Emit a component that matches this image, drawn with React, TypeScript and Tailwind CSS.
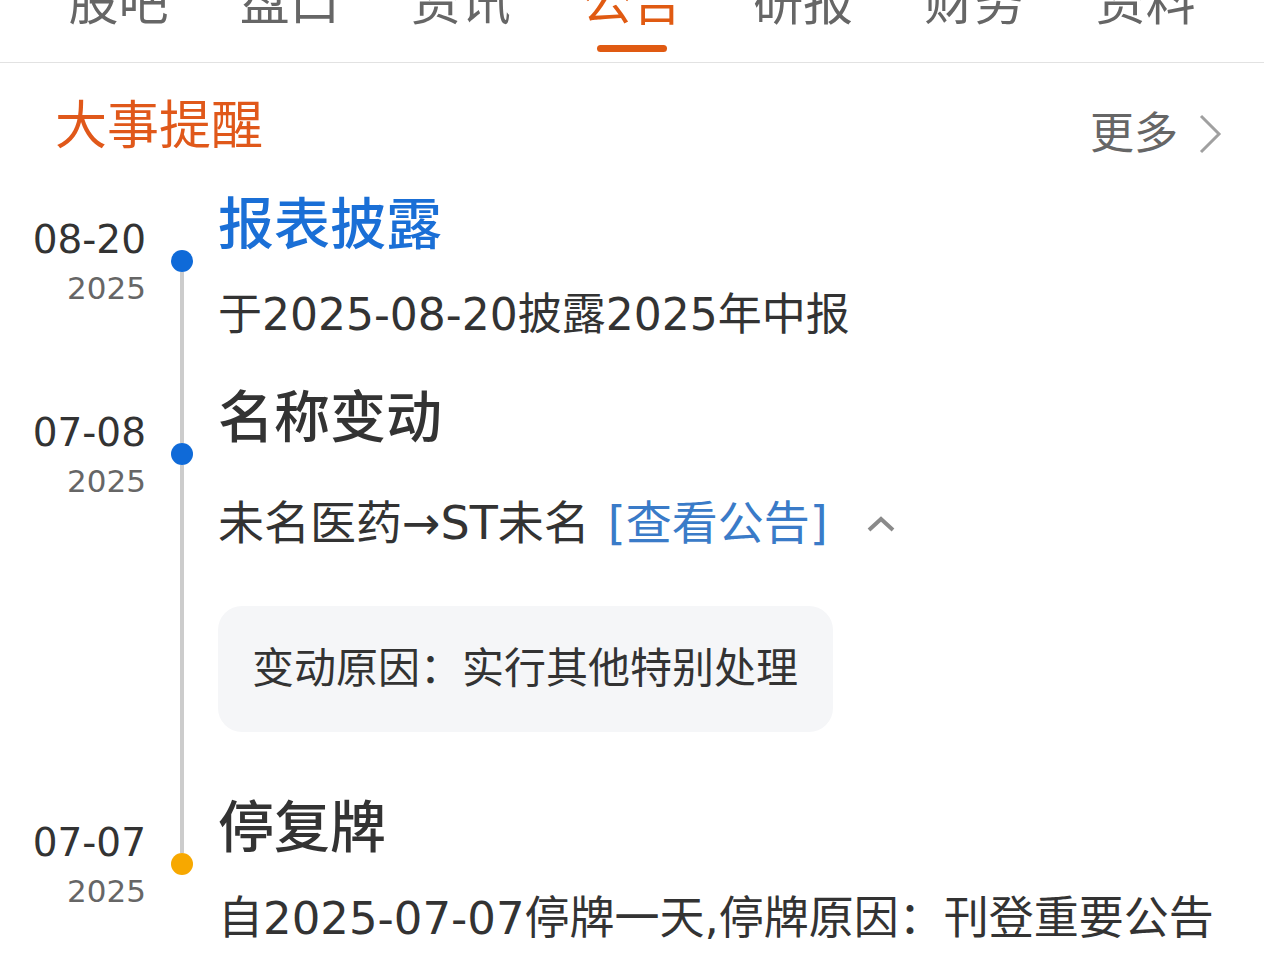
import React from 'react';

const FONT = '"DejaVu Sans", "Noto Sans CJK SC", sans-serif';

const tabs = ['股吧', '盘口', '资讯', '公告', '研报', '财务', '资料'];

interface EventItem {
  date: string;
  year: string;
  title: string;
  dot: string;
  titleClass: string;
  last?: boolean;
  first?: boolean;
  body: React.ReactNode;
  pb: string;
}

const ChevronUp = () => (
  <svg width="30" height="18" viewBox="0 0 30 18" className="ml-[38px] mt-[15px] shrink-0">
    <polyline points="3,15 15,4 27,15" fill="none" stroke="#8a8a8a" strokeWidth="4" />
  </svg>
);

const events: EventItem[] = [
  {
    date: '08-20',
    year: '2025',
    title: '报表披露',
    dot: 'bg-[#0f6ad8]',
    titleClass: 'text-[#1a6fd6]',
    first: true,
    pb: 'pb-[53px]',
    body: <p className="mt-[40px] text-[44px] leading-none text-[#333]">于2025-08-20披露2025年中报</p>,
  },
  {
    date: '07-08',
    year: '2025',
    title: '名称变动',
    dot: 'bg-[#0f6ad8]',
    titleClass: 'text-[#333]',
    pb: 'pb-[68px]',
    body: (
      <>
        <div className="mt-[54px] flex items-start whitespace-nowrap text-[46px] leading-none text-[#333]">
          <span>未名医药→ST未名</span>
          <span className="ml-[18px] text-[#3a7bc8]">[查看公告]</span>
          <ChevronUp />
        </div>
        <div className="mt-[60px] w-[615px] whitespace-nowrap rounded-[24px] bg-[#f5f6f8] px-[34px] py-[42px] text-[42px] leading-none text-[#333]">
          变动原因：实行其他特别处理
        </div>
      </>
    ),
  },
  {
    date: '07-07',
    year: '2025',
    title: '停复牌',
    dot: 'bg-[#f7a800]',
    titleClass: 'text-[#333]',
    last: true,
    pb: 'pb-[60px]',
    body: (
      <p className="mt-[40px] whitespace-nowrap text-[45px] leading-none text-[#333]">
        自2025-07-07停牌一天,停牌原因：刊登重要公告
      </p>
    ),
  },
];

export default function App() {
  return (
    <div className="min-h-[974px] overflow-hidden bg-white" style={{ fontFamily: FONT }}>
      {/* tab bar, scrolled partly out of view */}
      <div className="-mt-[22px] grid grid-cols-7 border-b border-[#e2e2e2] px-[33px] pb-[10px]">
        {tabs.map((t) => {
          const active = t === '公告';
          return (
            <div key={t} className="flex flex-col items-center">
              <span className={`text-[50px] leading-none ${active ? 'text-[#e05a12]' : 'text-[#666]'}`}>{t}</span>
              <span className={`mt-[17px] h-[7px] w-[70px] rounded-full ${active ? 'bg-[#e05a12]' : 'bg-transparent'}`} />
            </div>
          );
        })}
      </div>

      {/* section header */}
      <div className="flex items-start justify-between pl-[55px] pr-[42px] pt-[37px]">
        <h2 className="text-[52px] leading-none text-[#e0581a]">大事提醒</h2>
        <div className="mt-[12px] flex items-center">
          <span className="text-[44px] leading-none text-[#666]">更多</span>
          <svg width="24" height="40" viewBox="0 0 24 40" className="ml-[20px]">
            <polyline points="3,2 21,20 3,38" fill="none" stroke="#a0a0a0" strokeWidth="3" />
          </svg>
        </div>
      </div>

      {/* timeline */}
      <div className="mt-[41px]">
        {events.map((e) => (
          <div key={e.date} className="flex">
            <div className="w-[146px] shrink-0 pt-[23px] text-right">
              <div className="text-[39px] leading-none text-[#333]">{e.date}</div>
              <div className="mt-[14px] text-[31px] leading-none text-[#666]">{e.year}</div>
            </div>
            <div className="flex w-[72px] shrink-0 flex-col items-center">
              <div className={`h-[53px] w-[4px] ${e.first ? 'bg-transparent' : 'bg-[#cccccc]'}`} />
              <div className={`h-[22px] w-[22px] shrink-0 rounded-full ${e.dot}`} />
              <div className={`w-[4px] flex-1 ${e.last ? 'bg-transparent' : 'bg-[#cccccc]'}`} />
            </div>
            <div className={`flex-1 ${e.pb}`}>
              <h3 className={`text-[56px] font-medium leading-none ${e.titleClass}`}>{e.title}</h3>
              {e.body}
            </div>
          </div>
        ))}
      </div>
    </div>
  );
}
